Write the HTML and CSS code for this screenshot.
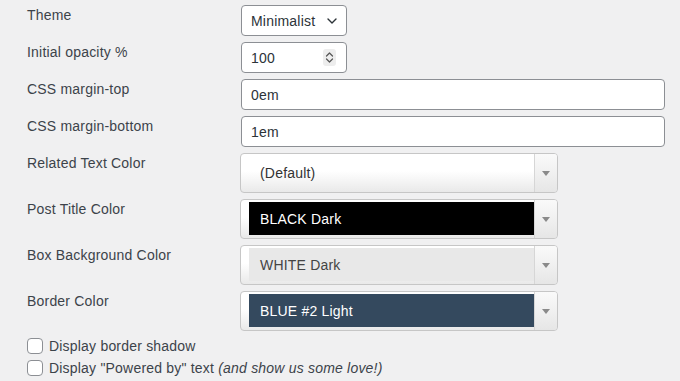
FILE: index.html
```html
<!DOCTYPE html>
<html>
<head>
<meta charset="utf-8">
<link rel="stylesheet" href="styles.css">
</head>
<body>
<div class="form">
  <div class="lbl">Theme</div>
  <div class="field">
    <div class="input select-theme"><span>Minimalist</span>
      <svg class="chev" width="10" height="6" viewBox="0 0 10 6"><polyline points="1,1 5,5 9,1" fill="none" stroke="#2c3338" stroke-width="1.4" stroke-linecap="round" stroke-linejoin="round"/></svg>
    </div>
  </div>

  <div class="lbl">Initial opacity %</div>
  <div class="field">
    <div class="input number"><span>100</span>
      <svg class="spin" width="13" height="17" viewBox="0 0 13 17"><rect x="0" y="0" width="13" height="17" rx="3" fill="#ededed"/><polyline points="3.5,7 6.5,4 9.5,7" fill="none" stroke="#555" stroke-width="1.2" stroke-linecap="round" stroke-linejoin="round"/><polyline points="3.5,10 6.5,13 9.5,10" fill="none" stroke="#555" stroke-width="1.2" stroke-linecap="round" stroke-linejoin="round"/></svg>
    </div>
  </div>

  <div class="lbl">CSS margin-top</div>
  <div class="field"><div class="input wide"><span>0em</span></div></div>

  <div class="lbl">CSS margin-bottom</div>
  <div class="field"><div class="input wide"><span>1em</span></div></div>

  <div class="lbl">Related Text Color</div>
  <div class="field">
    <div class="csel"><div class="swatch sw-default">(Default)</div><div class="arrow"><span class="tri"></span></div></div>
  </div>

  <div class="lbl">Post Title Color</div>
  <div class="field">
    <div class="csel"><div class="swatch sw-black">BLACK Dark</div><div class="arrow"><span class="tri"></span></div></div>
  </div>

  <div class="lbl">Box Background Color</div>
  <div class="field">
    <div class="csel"><div class="swatch sw-white">WHITE Dark</div><div class="arrow"><span class="tri"></span></div></div>
  </div>

  <div class="lbl">Border Color</div>
  <div class="field">
    <div class="csel"><div class="swatch sw-blue">BLUE #2 Light</div><div class="arrow"><span class="tri"></span></div></div>
  </div>
</div>

<div class="checks">
  <label class="check"><span class="box"></span>Display border shadow</label>
  <label class="check"><span class="box"></span>Display "Powered by" text&nbsp;<em>(and show us some love!)</em></label>
</div>
</body>
</html>
```

FILE: styles.css
```css
html, body {
  margin: 0;
  padding: 0;
  background: #f0f0f1;
}
body {
  font-family: "Liberation Sans", Arial, sans-serif;
  font-size: 14px;
  letter-spacing: 0.2px;
  color: #3c434a;
  padding-top: 5px;
}
.form {
  display: grid;
  grid-template-columns: 213px 1fr;
  row-gap: 6px;
  padding-left: 27px;
}
.lbl {
  line-height: 20px;
  color: #3c434a;
}
.field {
  display: flex;
}
.input {
  box-sizing: border-box;
  height: 31px;
  margin-left: 1px;
  border: 1px solid #8c8f94;
  border-radius: 4px;
  background: #fff;
  display: flex;
  align-items: center;
  padding-left: 9px;
  padding-right: 9px;
  color: #2c3338;
  font-size: 14px;
}
.select-theme, .number {
  width: 106px;
  justify-content: space-between;
}
.chev { margin-top: 1px; }
.spin { margin-right: 1px; }
.wide { width: 424px; }

.csel {
  box-sizing: border-box;
  width: 318px;
  height: 40px;
  border: 1px solid #c6c6c6;
  border-radius: 4px;
  background: linear-gradient(#ffffff 0%, #ffffff 45%, #e9e9e9 100%);
  display: flex;
  padding: 2px 0 3px 8px;
}
.swatch {
  flex: 1;
  display: flex;
  align-items: center;
  padding-left: 11px;
  font-size: 14px;
}
.sw-default { color: #333; }
.sw-black { background: #000; color: #fff; }
.sw-white { background: #e8e8e8; color: #444; }
.sw-blue { background: #34495e; color: #fff; }
.arrow {
  width: 22px;
  margin: -2px 0 -3px 0;
  border-left: 1px solid #d6d6d6;
  display: flex;
  align-items: center;
  justify-content: center;
  background: linear-gradient(#fafafa, #e6e6e6);
  border-radius: 0 3px 3px 0;
}
.tri {
  width: 0;
  height: 0;
  border-left: 4.5px solid transparent;
  border-right: 4.5px solid transparent;
  border-top: 5px solid #8a8a8a;
  margin-top: 1px;
}

.checks {
  padding-left: 27px;
  margin-top: 4px;
}
.check {
  display: flex;
  align-items: center;
  line-height: 22px;
  color: #3c434a;
}
.box {
  box-sizing: border-box;
  width: 16px;
  height: 16px;
  border: 1px solid #8c8f94;
  border-radius: 4px;
  background: #fff;
  margin-right: 6px;
}
em { font-style: italic; }
```
